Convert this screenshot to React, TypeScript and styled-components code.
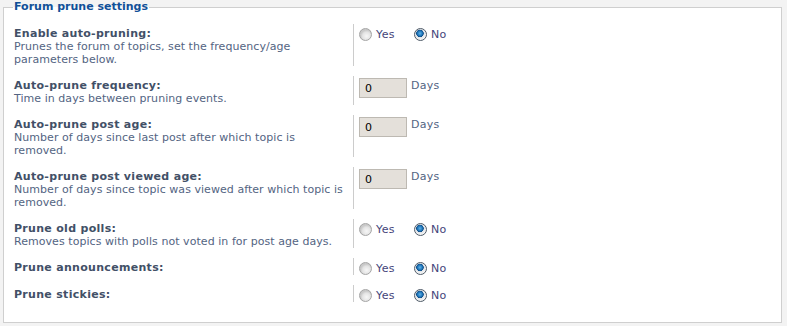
import React from "react";
import styled, { createGlobalStyle } from "styled-components";

const Global = createGlobalStyle`
  html, body { margin: 0; padding: 0; background: #f3f3f3; }
  body { font-family: "DejaVu Sans", Verdana, sans-serif; }
`;

const Page = styled.div`
  padding: 0 5px 0 3px;
`;

const Fieldset = styled.fieldset`
  margin: 0;
  padding: 10px 10px 20px 10px;
  border: 1px solid #cfcfcf;
  background: #ffffff;
  min-width: 0;
`;

const Legend = styled.legend`
  padding: 0 1px;
  margin-left: -1px;
  font-family: "DejaVu Sans", Tahoma, sans-serif;
  font-weight: bold;
  font-size: 11px;
  line-height: 14px;
  color: #115098;
`;

const Row = styled.dl`
  display: grid;
  grid-template-columns: 339px 1fr;
  margin: 0 0 10px 0;
  &:last-child { margin-bottom: 0; }
`;

const Term = styled.dt`
  padding-top: 3px;
  font-size: 11px;
  line-height: 13px;
`;

const Label = styled.label`
  display: block;
  font-weight: bold;
  letter-spacing: 0.3px;
  color: #425067;
`;

const Explain = styled.span`
  display: block;
  letter-spacing: 0.05px;
  color: #536482;
`;

const Def = styled.dd`
  margin: 0;
  border-left: 1px solid #cccccc;
  padding-left: 5px;
  display: flex;
  align-items: flex-start;
  font-size: 11px;
  line-height: 13px;
`;

const RadioLabel = styled.label`
  display: inline-flex;
  align-items: center;
  margin-top: 4px;
  margin-right: 19px;
  letter-spacing: 0.4px;
  color: #44447a;
`;

const Radio = styled.span<{ $checked?: boolean }>`
  box-sizing: border-box;
  width: 13px;
  height: 13px;
  border-radius: 50%;
  margin-right: 4px;
  border: 1px solid ${(p) => (p.$checked ? "#4f5b68" : "#a5a5a5")};
  background: ${(p) =>
    p.$checked
      ? "radial-gradient(circle at 45% 40%, #5fb4ea 0, #1e74b8 2.5px, #0e4d86 3.5px, #dfe3e8 4px, #f4f4f4 6px)"
      : "radial-gradient(circle at 60% 65%, #f7f7f7 0, #e4e4e4 4px, #c9c9c9 6px)"};
  flex: none;
`;

const TextInput = styled.input`
  box-sizing: border-box;
  width: 48px;
  height: 20px;
  margin: 2px 4px 0 0;
  padding: 0 0 0 5px;
  border: 1px solid #bdb9b2;
  background: #e4e0da;
  font-family: "DejaVu Sans", Verdana, sans-serif;
  font-size: 11px;
  color: #000;
`;

const Unit = styled.span`
  padding-top: 3px;
  letter-spacing: 0.3px;
  color: #536482;
`;

type Item =
  | { kind: "radio"; label: string; explain?: string }
  | { kind: "days"; label: string; explain: string };

const items: Item[] = [
  {
    kind: "radio",
    label: "Enable auto-pruning:",
    explain: "Prunes the forum of topics, set the frequency/age parameters below.",
  },
  { kind: "days", label: "Auto-prune frequency:", explain: "Time in days between pruning events." },
  {
    kind: "days",
    label: "Auto-prune post age:",
    explain: "Number of days since last post after which topic is removed.",
  },
  {
    kind: "days",
    label: "Auto-prune post viewed age:",
    explain: "Number of days since topic was viewed after which topic is removed.",
  },
  {
    kind: "radio",
    label: "Prune old polls:",
    explain: "Removes topics with polls not voted in for post age days.",
  },
  { kind: "radio", label: "Prune announcements:" },
  { kind: "radio", label: "Prune stickies:" },
];

const ExplainWrap = styled.div`
  width: 330px;
`;

export default function App() {
  return (
    <Page>
      <Global />
      <Fieldset>
        <Legend>Forum prune settings</Legend>
        {items.map((it, i) => (
          <Row key={i}>
            <Term>
              <Label>{it.label}</Label>
              {it.explain && (
                <ExplainWrap>
                  <Explain>{it.explain}</Explain>
                </ExplainWrap>
              )}
            </Term>
            <Def>
              {it.kind === "radio" ? (
                <>
                  <RadioLabel>
                    <Radio />
                    Yes
                  </RadioLabel>
                  <RadioLabel>
                    <Radio $checked />
                    No
                  </RadioLabel>
                </>
              ) : (
                <>
                  <TextInput defaultValue="0" />
                  <Unit>Days</Unit>
                </>
              )}
            </Def>
          </Row>
        ))}
      </Fieldset>
    </Page>
  );
}
